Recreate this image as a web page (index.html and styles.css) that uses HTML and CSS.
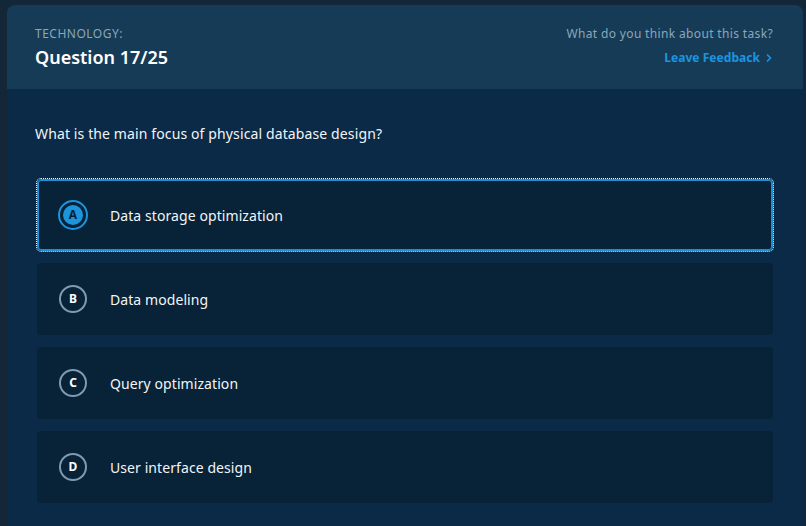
FILE: index.html
```html
<!DOCTYPE html>
<html>
<head>
<meta charset="utf-8">
<link rel="stylesheet" href="styles.css">
</head>
<body>
<div class="card">
  <header class="head">
    <div class="head-left">
      <div class="category">TECHNOLOGY:</div>
      <div class="title">Question 17/25</div>
    </div>
    <div class="head-right">
      <div class="ask">What do you think about this task?</div>
      <a class="feedback">Leave Feedback <svg width="8" height="10" viewBox="0 0 8 10"><path d="M2 1.5 L5.5 5 L2 8.5" fill="none" stroke="currentColor" stroke-width="1.6"/></svg></a>
    </div>
  </header>
  <main class="body">
    <p class="question">What is the main focus of physical database design?</p>
    <div class="options">
      <div class="option selected"><span class="badge"><span class="dot">A</span></span><span class="label">Data storage optimization</span></div>
      <div class="option"><span class="badge"><span class="dot">B</span></span><span class="label">Data modeling</span></div>
      <div class="option"><span class="badge"><span class="dot">C</span></span><span class="label">Query optimization</span></div>
      <div class="option"><span class="badge"><span class="dot">D</span></span><span class="label">User interface design</span></div>
    </div>
  </main>
</div>
</body>
</html>
```
FILE: styles.css
```css
html, body {
  margin: 0;
  padding: 0;
  height: 100%;
  background: #132739;
  font-family: "Noto Sans", "Open Sans", sans-serif;
  overflow: hidden;
}
body {
  padding: 5px 3px 0 7px;
  box-sizing: border-box;
}
.card {
  height: 521px;
  border-radius: 8px 8px 0 0;
  overflow: hidden;
  background: #0a2a47;
  display: flex;
  flex-direction: column;
}
.head {
  background: #163b57;
  height: 84px;
  box-sizing: border-box;
  padding: 21px 30px 0 28px;
  display: flex;
  justify-content: space-between;
  align-items: flex-start;
}
.category {
  color: #8ba6b9;
  font-size: 12px;
  letter-spacing: 0.5px;
  line-height: 16px;
}
.title {
  color: #ffffff;
  font-size: 18px;
  font-weight: 600;
  line-height: 24px;
  margin-top: 3px;
}
.head-right {
  text-align: right;
}
.ask {
  color: #8ba6b9;
  font-size: 12px;
  letter-spacing: 0.35px;
  line-height: 16px;
}
.feedback {
  display: inline-flex;
  align-items: center;
  gap: 5px;
  color: #1b95e0;
  font-size: 12px;
  font-weight: 700;
  letter-spacing: 0.05px;
  line-height: 16px;
  margin-top: 8px;
}
.body {
  padding: 0 30px 0 30px;
}
.question {
  color: #f2f5f8;
  font-size: 14px;
  letter-spacing: 0.12px;
  line-height: 20px;
  margin: 35px 0 35px -2px;
}
.options {
  display: flex;
  flex-direction: column;
  gap: 12px;
}
.option {
  height: 72px;
  box-sizing: border-box;
  background: #082237;
  border-radius: 4px;
  display: flex;
  align-items: center;
  padding-left: 22px;
}
.option.selected {
  border: 1px solid #1e8fd6;
  outline: 1px dotted #ffffff;
  outline-offset: 0;
  box-shadow: inset 0 0 0 1px #1e8fd6;
  padding-left: 20px;
}
.badge {
  width: 28px;
  height: 28px;
  box-sizing: border-box;
  border: 2px solid #7f9bb0;
  border-radius: 50%;
  display: flex;
  align-items: center;
  justify-content: center;
}
.dot {
  color: #ffffff;
  font-size: 12px;
  font-weight: 700;
  line-height: 1;
}
.selected .badge {
  width: 30px;
  height: 30px;
  border-color: #1c95dd;
}
.selected .dot {
  width: 20px;
  height: 20px;
  border-radius: 50%;
  background: #1c95dd;
  color: #0a2238;
  display: flex;
  align-items: center;
  justify-content: center;
}
.label {
  color: #f2f5f8;
  font-size: 14px;
  letter-spacing: 0.08px;
  margin-left: 23px;
}
.selected .label {
  margin-left: 22px;
}
```
